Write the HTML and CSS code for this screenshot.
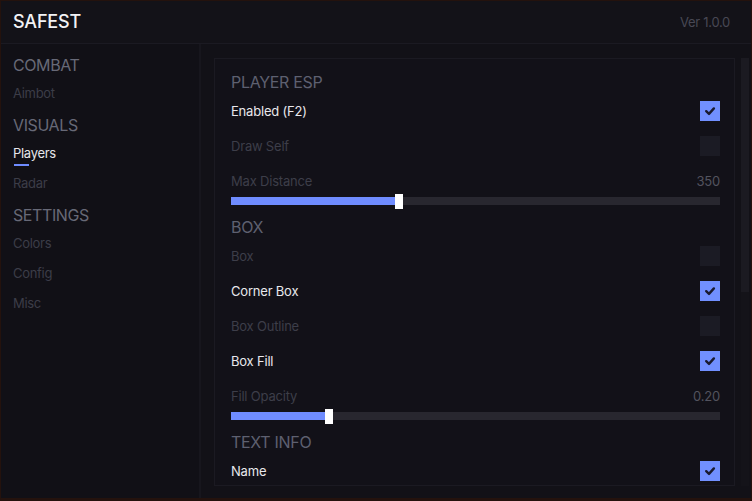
FILE: index.html
```html
<!DOCTYPE html>
<html>
<head>
<meta charset="utf-8">
<link rel="stylesheet" href="styles.css">
</head>
<body>
<div class="window">
  <header class="header">
    <div class="title">SAFEST</div>
    <div class="version">Ver 1.0.0</div>
  </header>
  <div class="body">
    <nav class="sidebar">
      <div class="nav-group">COMBAT</div>
      <div class="nav-item">Aimbot</div>
      <div class="nav-group">VISUALS</div>
      <div class="nav-item active">Players</div>
      <div class="nav-item">Radar</div>
      <div class="nav-group">SETTINGS</div>
      <div class="nav-item">Colors</div>
      <div class="nav-item">Config</div>
      <div class="nav-item">Misc</div>
    </nav>
    <main class="main">
      <section class="panel">
        <div class="section-title first">PLAYER ESP</div>
        <div class="row on"><span>Enabled (F2)</span><span class="check checked"><svg viewBox="0 0 20 20"><path d="M6.2 10.2 L9 12.9 L13.9 7.4"/></svg></span></div>
        <div class="row"><span>Draw Self</span><span class="check"></span></div>
        <div class="slider-block">
          <div class="slider-label"><span>Max Distance</span><span class="value">350</span></div>
          <div class="slider"><div class="track"><div class="fill" style="width:34.3%"></div></div><div class="thumb" style="left:34.3%"></div></div>
        </div>
        <div class="section-title">BOX</div>
        <div class="row"><span>Box</span><span class="check"></span></div>
        <div class="row on"><span>Corner Box</span><span class="check checked"><svg viewBox="0 0 20 20"><path d="M6.2 10.2 L9 12.9 L13.9 7.4"/></svg></span></div>
        <div class="row"><span>Box Outline</span><span class="check"></span></div>
        <div class="row on"><span>Box Fill</span><span class="check checked"><svg viewBox="0 0 20 20"><path d="M6.2 10.2 L9 12.9 L13.9 7.4"/></svg></span></div>
        <div class="slider-block">
          <div class="slider-label"><span>Fill Opacity</span><span class="value">0.20</span></div>
          <div class="slider"><div class="track"><div class="fill" style="width:20%"></div></div><div class="thumb" style="left:20%"></div></div>
        </div>
        <div class="section-title">TEXT INFO</div>
        <div class="row on"><span>Name</span><span class="check checked"><svg viewBox="0 0 20 20"><path d="M6.2 10.2 L9 12.9 L13.9 7.4"/></svg></span></div>
      </section>
      <div class="scrollbar"><div class="scroll-thumb"></div></div>
    </main>
  </div>
</div>
</body>
</html>
```
FILE: styles.css
```css
* { box-sizing: border-box; }
html, body { margin: 0; padding: 0; }
body {
  background: #24120d;
  width: 752px;
  height: 501px;
  overflow: hidden;
  font-family: Inter, "Noto Sans", sans-serif;
  padding: 1px 1px 3px 1px;
}
.window {
  width: 750px;
  height: 497px;
  background: #121117;
  display: flex;
  flex-direction: column;
  overflow: hidden;
}
.header {
  height: 43px;
  flex: none;
  display: flex;
  align-items: center;
  justify-content: space-between;
  padding: 0 21px 0 12px;
  background: #131218;
  border-bottom: 1px solid #1b1a22;
}
.title {
  color: #f2f2f5;
  font-size: 18px;
  font-weight: 500;
  letter-spacing: -0.2px;
  padding-bottom: 1px;
}
.version {
  color: #484854;
  font-size: 13px;
  letter-spacing: -0.3px;
}
.body {
  flex: 1;
  display: flex;
  min-height: 0;
}
.sidebar {
  width: 200px;
  flex: none;
  background: #111016;
  border-right: 2px solid #17161d;
  padding: 4px 0 0 12px;
}
.nav-group {
  height: 30px;
  padding-top: 4px;
  line-height: 26px;
  font-size: 16px;
  color: #676977;
  letter-spacing: -0.4px;
}
.nav-item {
  position: relative;
  height: 30px;
  line-height: 30px;
  font-size: 13px;
  color: #3c3d48;
  letter-spacing: -0.3px;
}
.nav-item.active { color: #e6e6ea; }
.nav-item.active::after {
  content: "";
  position: absolute;
  left: 1px;
  top: 26px;
  width: 15px;
  height: 2px;
  background: #6f8cff;
}
.main {
  flex: 1;
  display: flex;
  padding: 14px 2px 12px 13px;
  min-width: 0;
}
.panel {
  flex: 1;
  background: #121118;
  border: 1px solid #1b1a22;
  padding: 11px 14px 0 16px;
  overflow: hidden;
}
.section-title {
  height: 24px;
  line-height: 24px;
  margin-top: 6px;
  font-size: 16px;
  color: #5e6070;
  letter-spacing: -0.3px;
}
.section-title.first { margin-top: 0; }
.row {
  height: 35px;
  display: flex;
  align-items: center;
  justify-content: space-between;
  font-size: 13px;
  color: #3d3e49;
  letter-spacing: -0.2px;
  padding-bottom: 1px;
}
.row.on { color: #e8e8ec; }
.check {
  width: 20px;
  height: 20px;
  background: #1b1b24;
  display: block;
}
.check.checked { background: #7190ff; }
.check svg { width: 20px; height: 20px; display: block; }
.check path {
  fill: none;
  stroke: #1a1b30;
  stroke-width: 2.4;
  stroke-linecap: round;
  stroke-linejoin: round;
}
.slider-block { padding-top: 5px; }
.slider-label {
  height: 24px;
  display: flex;
  align-items: center;
  justify-content: space-between;
  font-size: 13px;
  color: #3d3e49;
  letter-spacing: -0.2px;
}
.value { color: #53535e; }
.slider {
  position: relative;
  height: 16px;
  display: flex;
  align-items: center;
}
.track {
  width: 100%;
  height: 8px;
  background: #28272f;
}
.fill {
  height: 100%;
  background: #6f8cff;
}
.thumb {
  position: absolute;
  top: 1px;
  width: 8px;
  height: 15px;
  margin-left: -4px;
  background: #ffffff;
}
.scrollbar {
  width: 8px;
  flex: none;
  margin-left: 6px;
  background: #141319;
}
.scroll-thumb {
  height: 234px;
  background: #1b1a21;
}
```
